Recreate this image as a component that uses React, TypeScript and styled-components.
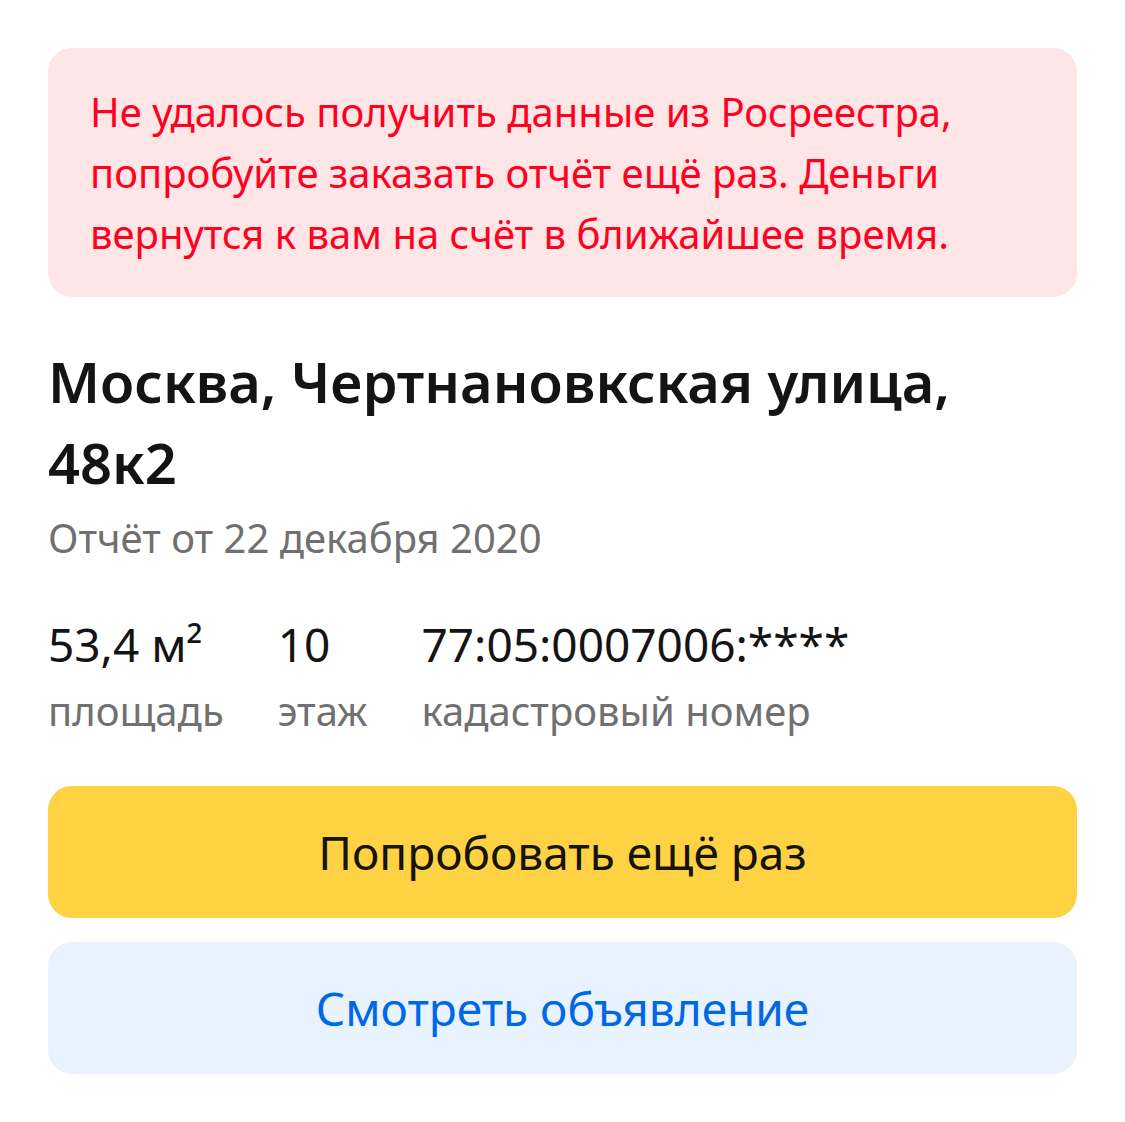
import React from "react";
import styled, { createGlobalStyle, css } from "styled-components";

const GlobalStyle = createGlobalStyle`
  * { box-sizing: border-box; }
  body {
    margin: 0;
    background: #ffffff;
    color: #141414;
    font-family: "Noto Sans", "Open Sans", sans-serif;
  }
`;

const Page = styled.main`
  padding: 48px;
`;

const Alert = styled.p`
  margin: 0 0 44px;
  padding: 33px 42px;
  border-radius: 24px;
  background: #ffe6e6;
  color: #ff0020;
  font-size: 40px;
  line-height: 61px;
`;

const Title = styled.h1`
  margin: 0 0 4px;
  font-size: 56px;
  line-height: 81px;
  font-weight: 600;
`;

const Subtitle = styled.p`
  margin: 0 0 40px;
  color: #707070;
  font-size: 40px;
  line-height: 61px;
`;

const Facts = styled.dl`
  display: flex;
  gap: 54px;
  margin: 0 0 45px;
`;

const Fact = styled.div`
  display: flex;
  flex-direction: column-reverse;
`;

const FactValue = styled.dd`
  margin: 0;
  font-size: 46px;
  line-height: 72px;
`;

const FactLabel = styled.dt`
  color: #707070;
  font-size: 40px;
  line-height: 61px;
`;

const Actions = styled.div`
  display: flex;
  flex-direction: column;
  gap: 24px;
`;

const action = css`
  display: block;
  width: 100%;
  border: 0;
  border-radius: 24px;
  padding: 30px 48px;
  font-family: inherit;
  font-size: 46px;
  line-height: 72px;
  text-align: center;
  text-decoration: none;
  cursor: pointer;
`;

const PrimaryButton = styled.button`
  ${action}
  background: #ffd243;
  color: #141408;
`;

const SecondaryLink = styled.a`
  ${action}
  background: #e8f3ff;
  color: #0068e6;
`;

const facts = [
  { label: "площадь", value: "53,4 м²" },
  { label: "этаж", value: "10" },
  { label: "кадастровый номер", value: "77:05:0007006:****" },
];

export default function App() {
  return (
    <>
      <GlobalStyle />
      <Page>
        <Alert role="alert">
          Не удалось получить данные из Росреестра, попробуйте заказать отчёт ещё раз. Деньги вернутся к вам на счёт в ближайшее время.
        </Alert>
        <Title>Москва, Чертнановкская улица, 48к2</Title>
        <Subtitle>Отчёт от 22 декабря 2020</Subtitle>
        <Facts>
          {facts.map((fact) => (
            <Fact key={fact.label}>
              <FactLabel>{fact.label}</FactLabel>
              <FactValue>{fact.value}</FactValue>
            </Fact>
          ))}
        </Facts>
        <Actions>
          <PrimaryButton type="button">Попробовать ещё раз</PrimaryButton>
          <SecondaryLink href="#listing">Смотреть объявление</SecondaryLink>
        </Actions>
      </Page>
    </>
  );
}
